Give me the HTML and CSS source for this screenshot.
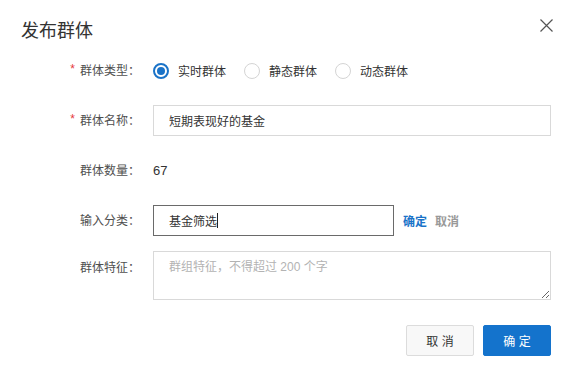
FILE: index.html
```html
<!DOCTYPE html>
<html lang="zh-CN">
<head>
  <meta charset="UTF-8" />
  <meta name="viewport" content="width=device-width, initial-scale=1.0" />
  <title>发布群体</title>
  <link rel="stylesheet" href="styles.css">
</head>
<body>
  <div class="dialog">
    <!-- 标题 -->
    <div class="dialog-header">
      <h2 class="dialog-title">发布群体</h2>
      <button class="close-btn" aria-label="关闭">
        <svg width="13" height="13" viewBox="0 0 13 13">
          <path d="M0.5 0.5 L12.5 12.5 M12.5 0.5 L0.5 12.5" stroke="#555" stroke-width="1.2" fill="none" />
        </svg>
      </button>
    </div>

    <!-- 表单 -->
    <div class="form">
      <div class="form-row">
        <label class="form-label"><span class="required">*</span>群体类型：</label>
        <div class="radio-group">
          <label class="radio checked"><span class="radio-dot"></span>实时群体</label>
          <label class="radio"><span class="radio-dot"></span>静态群体</label>
          <label class="radio"><span class="radio-dot"></span>动态群体</label>
        </div>
      </div>

      <div class="form-row">
        <label class="form-label"><span class="required">*</span>群体名称：</label>
        <input class="text-input" type="text" value="短期表现好的基金">
      </div>

      <div class="form-row">
        <label class="form-label">群体数量：</label>
        <span class="form-value">67</span>
      </div>

      <div class="form-row">
        <label class="form-label">输入分类：</label>
        <div class="text-input short active">基金筛选<span class="caret"></span></div>
        <a class="link link-primary" href="#">确定</a>
        <a class="link link-muted" href="#">取消</a>
      </div>

      <div class="form-row row-top">
        <label class="form-label">群体特征：</label>
        <textarea class="textarea" placeholder="群组特征，不得超过 200 个字"></textarea>
      </div>
    </div>

    <!-- 按钮 -->
    <div class="dialog-footer">
      <button class="btn">取 消</button>
      <button class="btn btn-primary">确 定</button>
    </div>
  </div>
</body>
</html>
```

FILE: styles.css
```css
body, input, button, textarea {
  font-family: "Liberation Sans", "Noto Sans CJK SC", sans-serif;
}
body {
  margin: 0;
  background: #fff;
  color: #333;
}
.dialog {
  width: 571px;
  height: 387px;
  box-sizing: border-box;
  padding: 18px 20px 0 21px;
}

/* === header === */
.dialog-header {
  display: flex;
  justify-content: space-between;
  align-items: flex-start;
  height: 37px;
}
.dialog-title {
  margin: 0;
  font-size: 18px;
  font-weight: normal;
  line-height: 26px;
  color: #333;
}
.close-btn {
  border: none;
  background: none;
  padding: 0;
  margin-right: -2px;
  margin-top: 1px;
  cursor: pointer;
  line-height: 0;
}

/* === form === */
.form {
  margin-left: -21px;
}
.form-row {
  display: flex;
  align-items: center;
  min-height: 31px;
  margin-bottom: 19px;
  font-size: 12px;
}
.form-row.row-top {
  align-items: flex-start;
  margin-top: -4px;
  margin-bottom: 0;
}
.form-label {
  width: 140px;
  flex: none;
  text-align: right;
  margin-right: 13px;
  color: #4f4f4f;
  line-height: 16px;
}
.row-top .form-label {
  margin-top: 9px;
}
.required {
  color: #e5383b;
  margin-right: 5px;
  position: relative;
  top: -2px;
}
.form-value {
  color: #333;
  font-size: 13px;
}

/* radio */
.radio-group {
  display: flex;
  gap: 18px;
}
.radio {
  display: flex;
  align-items: center;
  gap: 9px;
  color: #333;
}
.radio-dot {
  width: 16px;
  height: 16px;
  box-sizing: border-box;
  border: 1px solid #d4d4d4;
  border-radius: 50%;
  display: flex;
  align-items: center;
  justify-content: center;
}
.radio.checked .radio-dot {
  border: 2px solid #1a73c8;
}
.radio.checked .radio-dot::after {
  content: "";
  width: 8px;
  height: 8px;
  border-radius: 50%;
  background: #1a73c8;
}

/* inputs */
.text-input {
  width: 398px;
  height: 31px;
  box-sizing: border-box;
  border: 1px solid #d9d9d9;
  padding: 0 15px;
  font-size: 12px;
  color: #333;
  outline: none;
  display: flex;
  align-items: center;
}
.text-input.short {
  width: 241px;
}
.text-input.active {
  border-color: #6a6a6a;
}
.caret {
  display: inline-block;
  width: 1px;
  height: 15px;
  background: #222;
}
.link {
  font-size: 12px;
  font-weight: bold;
  text-decoration: none;
  margin-left: 9px;
}
.link + .link {
  margin-left: 8px;
}
.link-primary {
  color: #1a73c8;
}
.link-muted {
  color: #999;
}
.textarea {
  width: 398px;
  height: 49px;
  box-sizing: border-box;
  border: 1px solid #d9d9d9;
  padding: 7px 15px;
  font-size: 12px;
  line-height: 16px;
  color: #333;
  outline: none;
  resize: both;
}
.textarea::placeholder {
  color: #b3b3b3;
}

/* === footer === */
.dialog-footer {
  display: flex;
  justify-content: flex-end;
  gap: 9px;
  margin-top: 25px;
}
.btn {
  width: 68px;
  height: 31px;
  font-size: 12px;
  border: 1px solid #dcdcdc;
  border-radius: 2px;
  background: #f8f8f8;
  color: #333;
  cursor: pointer;
}
.btn-primary {
  background: #1473cc;
  border-color: #1473cc;
  color: #fff;
}
```
